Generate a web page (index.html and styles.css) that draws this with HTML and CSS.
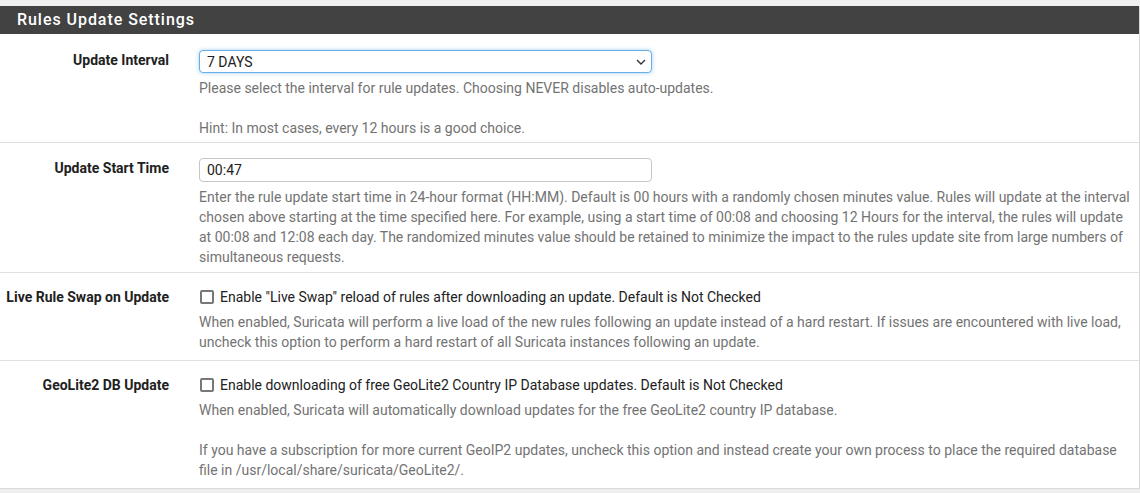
FILE: index.html
```html
<!DOCTYPE html>
<html>
<head>
<meta charset="utf-8">
<link rel="stylesheet" href="styles.css">
</head>
<body>
<div class="panel">
  <div class="panel-heading">Rules Update Settings</div>
  <div class="panel-body">
    <div class="row">
      <div class="label">Update Interval</div>
      <div class="control">
        <div class="select-wrap">
          <select class="select"><option>7 DAYS</option></select>
          <svg class="chevron" width="10" height="6" viewBox="0 0 10 6"><path d="M1 1 L5 5 L9 1" fill="none" stroke="#333" stroke-width="1.4"/></svg>
        </div>
        <div class="help">Please select the interval for rule updates. Choosing NEVER disables auto-updates.<br><br>Hint: In most cases, every 12 hours is a good choice.</div>
      </div>
    </div>
    <div class="row">
      <div class="label">Update Start Time</div>
      <div class="control">
        <input class="input" type="text" value="00:47">
        <div class="help">Enter the rule update start time in 24-hour format (HH:MM). Default is 00 hours with a randomly chosen minutes value. Rules will update at the interval chosen above starting at the time specified here. For example, using a start time of 00:08 and choosing 12 Hours for the interval, the rules will update at 00:08 and 12:08 each day. The randomized minutes value should be retained to minimize the impact to the rules update site from large numbers of simultaneous requests.</div>
      </div>
    </div>
    <div class="row check-row">
      <div class="label">Live Rule Swap on Update</div>
      <div class="control">
        <label class="check"><span class="box"></span>Enable "Live Swap" reload of rules after downloading an update. Default is Not Checked</label>
        <div class="help">When enabled, Suricata will perform a live load of the new rules following an update instead of a hard restart. If issues are encountered with live load, uncheck this option to perform a hard restart of all Suricata instances following an update.</div>
      </div>
    </div>
    <div class="row check-row last">
      <div class="label">GeoLite2 DB Update</div>
      <div class="control">
        <label class="check"><span class="box"></span>Enable downloading of free GeoLite2 Country IP Database updates. Default is Not Checked</label>
        <div class="help">When enabled, Suricata will automatically download updates for the free GeoLite2 country IP database.<br><br>If you have a subscription for more current GeoIP2 updates, uncheck this option and instead create your own process to place the required database file in /usr/local/share/suricata/GeoLite2/.</div>
      </div>
    </div>
  </div>
</div>
</body>
</html>
```
FILE: styles.css
```css
html, body {
  margin: 0;
  padding: 0;
  background: #efefef;
  font-family: Roboto, "Liberation Sans", sans-serif;
  font-size: 14px;
  line-height: 20px;
  color: #212121;
}
.panel {
  margin-top: 6px;
  width: 1139px;
  background: #fff;
  border-right: 1px solid #d9d9d9;
  border-bottom: 1px solid #d9d9d9;
}
.panel-heading {
  background: #424242;
  color: #fff;
  height: 28px;
  line-height: 28px;
  padding-left: 17px;
  font-size: 16px;
  font-weight: 500;
  letter-spacing: 0.95px;
}
.row {
  display: flex;
  border-bottom: 1px solid #e0e0e0;
  padding: 15px 0 5px;
}
.row:first-child {
  padding-top: 16px;
  padding-bottom: 4px;
}
.row.check-row {
  padding-top: 14px;
  padding-bottom: 8px;
}
.row.check-row.last {
  border-bottom: none;
  padding-top: 14px;
  padding-bottom: 8px;
}
.label {
  width: 169px;
  padding-right: 15px;
  text-align: right;
  font-weight: 700;
  color: #212121;
  flex-shrink: 0;
}
.control {
  flex: 1;
  padding-left: 15px;
  padding-right: 8px;
}
.select-wrap {
  position: relative;
  width: 453px;
}
.select {
  appearance: none;
  -webkit-appearance: none;
  display: block;
  width: 453px;
  height: 23px;
  box-sizing: border-box;
  border: 1px solid #66afe9;
  border-radius: 4px;
  box-shadow: 0 0 4px rgba(102, 175, 233, 0.6);
  background: #fff;
  font-family: Roboto, "Liberation Sans", sans-serif;
  font-size: 14px;
  color: #212121;
  padding: 0 7px;
  margin: 0;
  outline: none;
}
.chevron {
  position: absolute;
  right: 6px;
  top: 9px;
}
.input {
  display: block;
  width: 453px;
  height: 24px;
  box-sizing: border-box;
  border: 1px solid #c6c6c6;
  border-radius: 4px;
  font-family: Roboto, "Liberation Sans", sans-serif;
  font-size: 14px;
  color: #212121;
  padding: 0 7px;
  margin: 0;
  outline: none;
}
.help {
  color: #737373;
  margin-top: 5px;
}
.check {
  display: flex;
  align-items: center;
  color: #212121;
}
.box {
  width: 14px;
  height: 14px;
  box-sizing: border-box;
  border: 2px solid #777;
  border-radius: 2px;
  margin: 0 6px 0 1px;
  flex-shrink: 0;
}
.check + .help {
  margin-top: 5px;
}
```
